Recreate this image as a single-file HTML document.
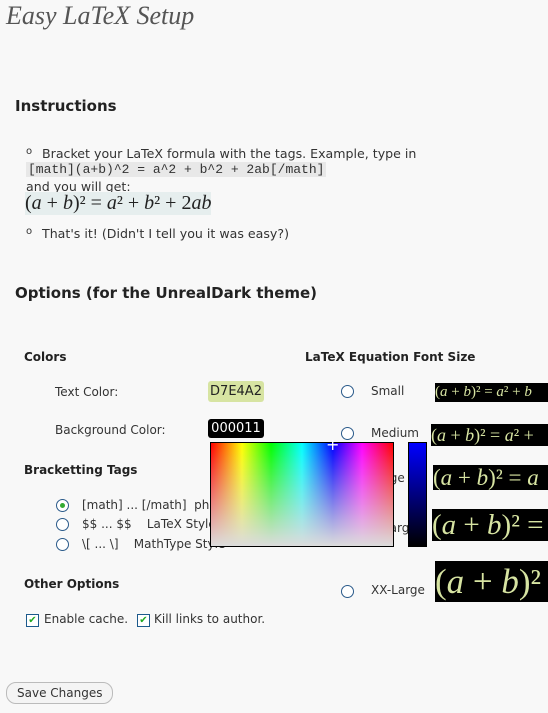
<!DOCTYPE html>
<html><head><meta charset="utf-8"><style>
body{margin:0;width:548px;height:713px;overflow:hidden;background:#f8f8f8;font-family:"DejaVu Sans","Liberation Sans",sans-serif;font-size:12px;color:#333;position:relative}
.a{position:absolute;white-space:nowrap}
h1{position:absolute;left:6px;top:1px;margin:0;font:italic 26px "Liberation Serif",serif;color:#555}
.h{font-weight:bold;color:#222;font-size:12px}
.h2{font-weight:bold;color:#222;font-size:15px}
.r{position:absolute;width:11px;height:11px;border:1px solid #2a5a8a;border-radius:50%;background:#fff}
.eq{position:absolute;background:#000;color:#d7e4a2;font-family:"Liberation Serif",serif;white-space:nowrap;overflow:hidden}
.cb{position:absolute;width:11px;height:11px;border:1px solid #1c5a8c;background:#fff;color:#2a2;font-size:10px;line-height:11px;text-align:center}
</style></head><body>
<h1>Easy LaTeX Setup</h1>
<div class="a h2" style="left:15px;top:97px">Instructions</div>
<div class="a" style="left:26px;top:146px;font-size:10px">o</div>
<div class="a" style="left:42px;top:146px;font-size:12.6px">Bracket your LaTeX formula with the tags. Example, type in</div>
<div class="a" style="left:26px;top:162px;background:#e8e8e8;font:13px 'Liberation Mono',monospace;padding:0 2px">[math](a+b)^2 = a^2 + b^2 + 2ab[/math]</div>
<div class="a" style="left:26px;top:179px;font-size:12.6px">and you will get:</div>
<div class="a" style="left:25px;top:192px;font:20px 'Liberation Serif',serif;color:#222;background:#e6eeee">(<i>a</i> + <i>b</i>)² = <i>a</i>² + <i>b</i>² + 2<i>ab</i></div>
<div class="a" style="left:26px;top:226px;font-size:10px">o</div>
<div class="a" style="left:42px;top:226px;font-size:12.6px">That's it! (Didn't I tell you it was easy?)</div>
<div class="a h2" style="left:15px;top:284px">Options (for the UnrealDark theme)</div>
<div class="a h" style="left:24px;top:350px">Colors</div>
<div class="a h" style="left:305px;top:350px">LaTeX Equation Font Size</div>
<div class="a" style="left:55px;top:385px">Text Color:</div>
<div class="a" style="left:208px;top:381px;width:56px;height:21px;background:#d7e4a2;border-radius:3px;font-size:13px;line-height:21px;text-align:center;color:#222">D7E4A2</div>
<div class="a" style="left:55px;top:423px">Background Color:</div>
<div class="a" style="left:208px;top:419px;width:56px;height:19px;background:#000;border-radius:3px;font-size:13px;line-height:19px;text-align:center;color:#fff">000011</div>
<div class="a h" style="left:24px;top:463px">Bracketting Tags</div>
<div class="r" style="left:56px;top:499px"><div style="width:5px;height:5px;background:#3a3;border-radius:50%;margin:3px"></div></div>
<div class="a" style="left:82px;top:498px">[math] ... [/math]&nbsp; php</div>
<div class="r" style="left:56px;top:518px"></div>
<div class="a" style="left:82px;top:517px">$$ ... $$ &nbsp;&nbsp; LaTeX Style</div>
<div class="r" style="left:56px;top:538px"></div>
<div class="a" style="left:82px;top:537px">\[ ... \] &nbsp;&nbsp; MathType Style</div>
<div class="a h" style="left:24px;top:577px">Other Options</div>
<div class="cb" style="left:26px;top:614px">✔</div>
<div class="a" style="left:44px;top:612px">Enable cache.</div>
<div class="cb" style="left:137px;top:614px">✔</div>
<div class="a" style="left:154px;top:612px">Kill links to author.</div>
<div class="a" style="left:6px;top:682px;border:1px solid #bbb;border-radius:10px;padding:3px 10px;background:#f4f4f4;font-size:12px">Save Changes</div>
<div class="r" style="left:341px;top:385px"></div><div class="a" style="left:371px;top:384px">Small</div>
<div class="r" style="left:341px;top:427px"></div><div class="a" style="left:371px;top:426px">Medium</div>
<div class="a" style="left:371px;top:471px">Large</div>
<div class="a" style="left:371px;top:521px">X-Large</div>
<div class="r" style="left:341px;top:585px"></div><div class="a" style="left:371px;top:583px">XX-Large</div>
<div class="eq" style="left:435px;top:383px;width:113px;height:19px;font-size:15px;line-height:19px">(<i>a</i> + <i>b</i>)² = <i>a</i>² + <i>b</i></div>
<div class="eq" style="left:431px;top:424px;width:117px;height:22px;font-size:18px;line-height:22px">(<i>a</i> + <i>b</i>)² = <i>a</i>² +</div>
<div class="eq" style="left:433px;top:465px;width:115px;height:25px;font-size:23px;line-height:25px">(<i>a</i> + <i>b</i>)² = <i>a</i></div>
<div class="eq" style="left:432px;top:509px;width:116px;height:32px;font-size:29px;line-height:32px">(<i>a</i> + <i>b</i>)² =</div>
<div class="eq" style="left:435px;top:561px;width:113px;height:41px;font-size:35px;line-height:41px">(<i>a</i> + <i>b</i>)²</div>
<div class="a" style="left:210px;top:442px;width:182px;height:103px;border:1px solid #000;background:linear-gradient(to bottom,rgba(220,220,220,0),rgba(220,220,220,1)),linear-gradient(to right,#f00,#ff0 17%,#0f0 33%,#0ff 50%,#00f 67%,#f0f 83%,#f00)"></div>
<div class="a" style="left:408px;top:442px;width:17px;height:103px;border:1px solid #000;background:linear-gradient(#00f,#000)"></div>
<div class="a" style="left:326px;top:435px;font-size:16px;color:#fff">+</div>
</body></html>
